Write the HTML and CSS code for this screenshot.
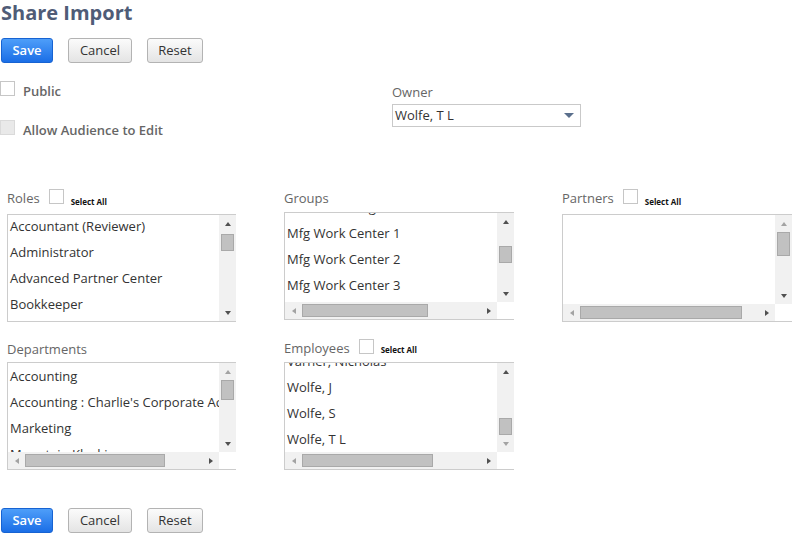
FILE: index.html
```html
<!DOCTYPE html>
<html>
<head>
<meta charset="utf-8">
<link rel="stylesheet" href="styles.css">
</head>
<body>
<div class="page">
  <h1 class="title">Share Import</h1>
  <div class="btnbar btnbar-top">
    <button class="btn btn-primary">Save</button>
    <button class="btn">Cancel</button>
    <button class="btn btn-reset">Reset</button>
  </div>

  <div class="opts">
    <div class="opts-left">
      <div class="chk-row"><span class="cb"></span><span class="chk-label">Public</span></div>
      <div class="chk-row"><span class="cb cb-disabled"></span><span class="chk-label">Allow Audience to Edit</span></div>
    </div>
    <div class="owner">
      <div class="owner-label">Owner</div>
      <div class="select"><span>Wolfe, T L</span><span class="caret"></span></div>
    </div>
  </div>

  <div class="fields">
    <!-- Roles -->
    <div class="field">
      <div class="fhead fhead-27">
        <span class="flabel pt2">Roles</span><span class="cb cb-head mt2"></span><span class="selall mt10">Select All</span>
      </div>
      <div class="lb">
        <div class="lb-view">
          <div class="lb-items" style="margin-top:-2px">
            <div class="item">Accountant (Reviewer)</div>
            <div class="item">Administrator</div>
            <div class="item">Advanced Partner Center</div>
            <div class="item">Bookkeeper</div>
            <div class="item">CEO</div>
          </div>
        </div>
        <div class="vbar">
          <div class="sbtn"><span class="arr up"></span></div>
          <div class="strack"><div class="vthumb" style="margin-top:2px;height:17px"></div></div>
          <div class="sbtn"><span class="arr down"></span></div>
        </div>
      </div>
    </div>

    <!-- Groups -->
    <div class="field">
      <div class="fhead fhead-25">
        <span class="flabel pt2">Groups</span>
      </div>
      <div class="lb lb-h">
        <div class="lb-view">
          <div class="lb-items" style="margin-top:-19px">
            <div class="item">Manufacturing</div>
            <div class="item">Mfg Work Center 1</div>
            <div class="item">Mfg Work Center 2</div>
            <div class="item">Mfg Work Center 3</div>
          </div>
        </div>
        <div class="vbar">
          <div class="sbtn"><span class="arr up"></span></div>
          <div class="strack"><div class="vthumb" style="margin-top:16px;height:17px"></div></div>
          <div class="sbtn"><span class="arr down"></span></div>
        </div>
        <div class="hbar">
          <div class="sbtn"><span class="arr left off"></span></div>
          <div class="htrack"><div class="hthumb" style="width:126px"></div></div>
          <div class="sbtn"><span class="arr right"></span></div>
        </div>
        <div class="corner"></div>
      </div>
    </div>

    <!-- Partners -->
    <div class="field">
      <div class="fhead fhead-27">
        <span class="flabel pt2">Partners</span><span class="cb cb-head mt2"></span><span class="selall mt10">Select All</span>
      </div>
      <div class="lb lb-h">
        <div class="lb-view"><div class="lb-items"></div></div>
        <div class="vbar">
          <div class="sbtn"><span class="arr up off"></span></div>
          <div class="strack"><div class="vthumb" style="margin-top:0;height:24px"></div></div>
          <div class="sbtn"><span class="arr down"></span></div>
        </div>
        <div class="hbar">
          <div class="sbtn"><span class="arr left off"></span></div>
          <div class="htrack"><div class="hthumb" style="width:162px"></div></div>
          <div class="sbtn"><span class="arr right"></span></div>
        </div>
        <div class="corner"></div>
      </div>
    </div>

    <!-- Departments -->
    <div class="field">
      <div class="fhead fhead-26">
        <span class="flabel pt4">Departments</span>
      </div>
      <div class="lb lb-h">
        <div class="lb-view">
          <div class="lb-items">
            <div class="item">Accounting</div>
            <div class="item">Accounting : Charlie's Corporate Accounting</div>
            <div class="item">Marketing</div>
            <div class="item">Mountain Kluski</div>
          </div>
        </div>
        <div class="vbar">
          <div class="sbtn"><span class="arr up off"></span></div>
          <div class="strack"><div class="vthumb" style="margin-top:0;height:20px"></div></div>
          <div class="sbtn"><span class="arr down"></span></div>
        </div>
        <div class="hbar">
          <div class="sbtn"><span class="arr left off"></span></div>
          <div class="htrack"><div class="hthumb" style="width:140px"></div></div>
          <div class="sbtn"><span class="arr right"></span></div>
        </div>
        <div class="corner"></div>
      </div>
    </div>

    <!-- Employees -->
    <div class="field">
      <div class="fhead fhead-26">
        <span class="flabel pt3">Employees</span><span class="cb cb-head mt3"></span><span class="selall mt9">Select All</span>
      </div>
      <div class="lb lb-h">
        <div class="lb-view">
          <div class="lb-items" style="margin-top:-15px">
            <div class="item">Varner, Nicholas</div>
            <div class="item">Wolfe, J</div>
            <div class="item">Wolfe, S</div>
            <div class="item">Wolfe, T L</div>
          </div>
        </div>
        <div class="vbar">
          <div class="sbtn"><span class="arr up"></span></div>
          <div class="strack"><div class="vthumb" style="margin-top:38px;height:17px"></div></div>
          <div class="sbtn"><span class="arr down off"></span></div>
        </div>
        <div class="hbar">
          <div class="sbtn"><span class="arr left off"></span></div>
          <div class="htrack"><div class="hthumb" style="width:131px"></div></div>
          <div class="sbtn"><span class="arr right"></span></div>
        </div>
        <div class="corner"></div>
      </div>
    </div>
  </div>

  <div class="btnbar btnbar-bottom">
    <button class="btn btn-primary">Save</button>
    <button class="btn">Cancel</button>
    <button class="btn btn-reset">Reset</button>
  </div>
</div>
</body>
</html>
```

FILE: styles.css
```css
html, body {
  margin: 0;
  padding: 0;
  background: #ffffff;
}
body {
  font-family: "Open Sans", "Liberation Sans", sans-serif;
  font-size: 13px;
  color: #333333;
}
.page {
  width: 800px;
}
.title {
  margin: 0 0 0 1px;
  font-size: 20px;
  line-height: 26px;
  height: 26px;
  font-weight: 700;
  color: #4f5c77;
}

/* buttons */
.btnbar {
  display: flex;
  gap: 15px;
  margin-left: 1px;
}
.btnbar-top { margin-top: 12px; }
.btnbar-bottom { margin-top: 38px; }
.btn {
  box-sizing: border-box;
  height: 25px;
  width: 64px;
  padding: 0;
  border: 1px solid #b3b3b3;
  border-radius: 3px;
  background: linear-gradient(#fbfbfb, #e4e4e4);
  font-family: "Open Sans", "Liberation Sans", sans-serif;
  font-size: 13px;
  color: #333333;
  line-height: 23px;
}
.btn-primary {
  width: 52px;
  border-color: #1763d2;
  background: linear-gradient(#4e9ef9, #1b6ee6);
  color: #ffffff;
  font-weight: 600;
}
.btn-reset { width: 56px; }

/* options */
.opts {
  display: flex;
  margin-top: 17px;
}
.opts-left {
  width: 392px;
  display: flex;
  flex-direction: column;
  gap: 19px;
}
.chk-row {
  height: 20px;
  display: flex;
  align-items: flex-start;
}
.cb {
  box-sizing: border-box;
  width: 15px;
  height: 15px;
  border: 1px solid #c6c6c6;
  background: #ffffff;
  flex: none;
}
.chk-row .cb { margin-top: 1px; }
.cb-disabled {
  background: #e9e9e9;
  border-color: #dadada;
}
.chk-label {
  margin-left: 8px;
  margin-top: 2px;
  line-height: 18px;
  font-weight: 600;
  color: #666666;
}
.owner {
  width: 189px;
}
.owner-label {
  margin-top: 3px;
  line-height: 18px;
  color: #666666;
}
.select {
  box-sizing: border-box;
  margin-top: 3px;
  height: 23px;
  border: 1px solid #c9c9c9;
  display: flex;
  align-items: center;
  justify-content: space-between;
  padding: 0 6px 0 2px;
  line-height: 21px;
  color: #333333;
}
.caret {
  width: 0;
  height: 0;
  border-left: 5px solid transparent;
  border-right: 5px solid transparent;
  border-top: 5px solid #5a6f8c;
}

/* fields grid */
.fields {
  margin-top: 48px;
  padding-left: 7px;
  display: grid;
  grid-template-columns: 229px 230px 230px;
  column-gap: 48px;
  row-gap: 14px;
  align-items: start;
}
.fhead {
  display: flex;
  align-items: flex-start;
}
.fhead-25 { height: 25px; }
.fhead-26 { height: 26px; }
.fhead-27 { height: 27px; }
.flabel {
  line-height: 18px;
  color: #666666;
}
.pt2 { padding-top: 2px; }
.pt3 { padding-top: 3px; }
.pt4 { padding-top: 4px; }
.mt2 { margin-top: 2px; }
.mt3 { margin-top: 3px; }
.mt9 { margin-top: 9px; }
.mt10 { margin-top: 10px; }
.cb-head { margin-left: 9px; }
.selall {
  margin-left: 7px;
  font-size: 8px;
  line-height: 10px;
  font-weight: 700;
  color: #111111;
}

/* list boxes */
.lb {
  box-sizing: border-box;
  height: 108px;
  border: 1px solid #cccccc;
  border-right: 0;
  display: grid;
  grid-template-columns: minmax(0, 1fr) 17px;
  grid-template-rows: minmax(0, 1fr);
  background: #ffffff;
}
.lb-h {
  grid-template-rows: minmax(0, 1fr) 17px;
}
.lb-view {
  overflow: hidden;
}
.item {
  height: 26px;
  line-height: 26px;
  padding-left: 2px;
  white-space: nowrap;
  color: #333333;
}
.vbar {
  background: #f1f1f1;
  display: flex;
  flex-direction: column;
}
.hbar {
  background: #f1f1f1;
  display: flex;
}
.sbtn {
  flex: none;
  width: 17px;
  height: 17px;
  display: flex;
  align-items: center;
  justify-content: center;
}
.strack {
  flex: 1;
  display: flex;
  flex-direction: column;
  align-items: center;
}
.htrack {
  flex: 1;
  display: flex;
  align-items: center;
}
.vthumb {
  box-sizing: border-box;
  width: 13px;
  background: #c1c1c1;
  border: 1px solid #a9a9a9;
}
.hthumb {
  box-sizing: border-box;
  height: 13px;
  background: #c1c1c1;
  border: 1px solid #a9a9a9;
}
.corner {
  background: #ffffff;
}
.arr {
  width: 0;
  height: 0;
}
.arr.up {
  border-left: 3.5px solid transparent;
  border-right: 3.5px solid transparent;
  border-bottom: 4px solid #505050;
}
.arr.down {
  border-left: 3.5px solid transparent;
  border-right: 3.5px solid transparent;
  border-top: 4px solid #505050;
}
.arr.left {
  border-top: 3.5px solid transparent;
  border-bottom: 3.5px solid transparent;
  border-right: 4px solid #505050;
}
.arr.right {
  border-top: 3.5px solid transparent;
  border-bottom: 3.5px solid transparent;
  border-left: 4px solid #505050;
}
.arr.up.off { border-bottom-color: #a3a3a3; }
.arr.down.off { border-top-color: #a3a3a3; }
.arr.left.off { border-right-color: #a3a3a3; }
.arr.right.off { border-left-color: #a3a3a3; }
```
